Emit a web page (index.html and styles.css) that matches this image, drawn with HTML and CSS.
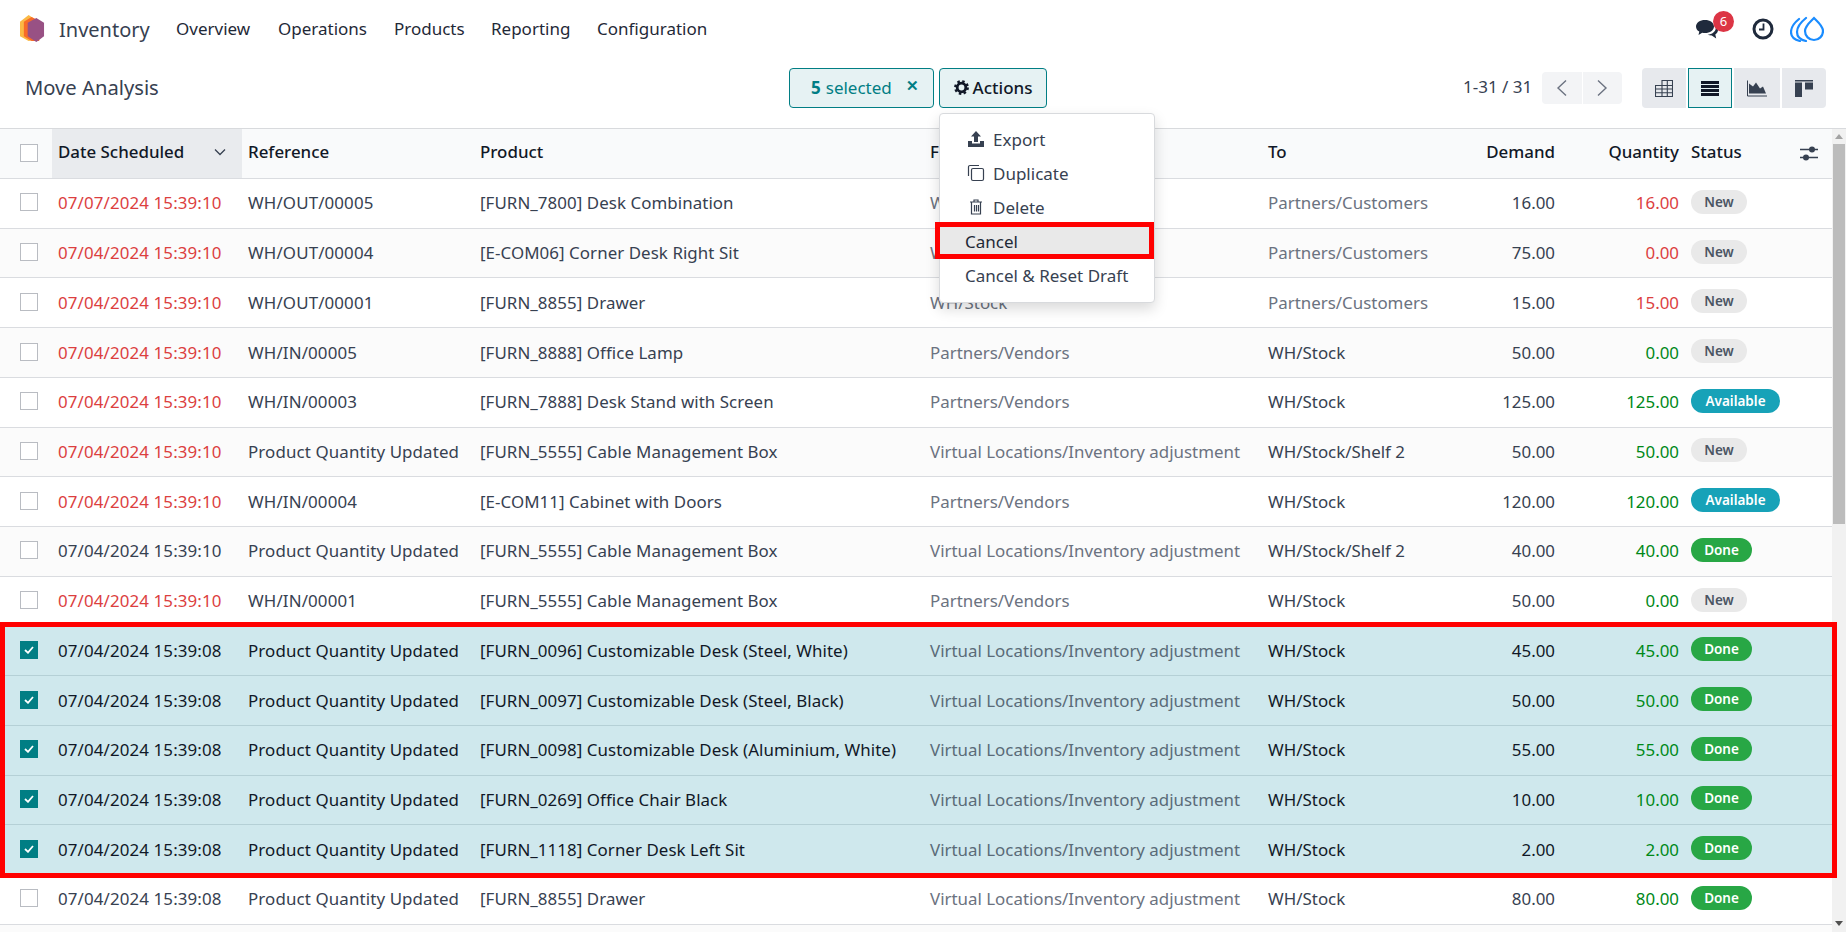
FILE: index.html
```html
<!DOCTYPE html>
<html lang="en">
<head>
<meta charset="utf-8">
<title>Move Analysis</title>
<link rel="stylesheet" href="styles.css">
</head>
<body>
<nav class="navbar">
  <svg class="logo" viewBox="0 0 26 29"><polygon points="0,7 9,0 15,4 15,26 9,27 0,22" fill="#fbb945"/><polygon points="4,7 12,2 20,6 20,27 12,27 4,22" fill="#f76b28"/><polygon points="8,8 17,3 25,8 25,22 17,28 8,22" fill="#985184"/></svg>
  <span class="brand">Inventory</span>
  <a class="menu m1">Overview</a>
  <a class="menu m2">Operations</a>
  <a class="menu m3">Products</a>
  <a class="menu m4">Reporting</a>
  <a class="menu m5">Configuration</a>
  <div class="systray">
    <span class="chat">
      <svg class="chat-icon" viewBox="0 0 22 19"><path d="M9 0c5 0 9 2.700 9 6.500S14 13 9 13c-1 0-2-.1-2.800-.3L2.500 15l.8-3.400C1.200 10.500 0 8.700 0 6.500 0 2.700 4 0 9 0z" fill="#1f2a3c"/><path d="M19.300 5.500C21 6.700 22 8.300 22 10c0 1.800-1 3.300-2.700 4.400l.9 4.100-4.400-2.900c-1.500 0-3-.3-4.200-.8 4.500-.3 8.200-3.200 8.200-7 0-.8-.2-1.600-.5-2.300z" fill="#1f2a3c"/></svg>
      <span class="badge">6</span>
    </span>
    <svg class="clock" viewBox="0 0 22 22"><circle cx="11" cy="11" r="9" fill="#fff" stroke="#1f2a3c" stroke-width="3"/><path d="M11.500 5.500v6H7" fill="none" stroke="#1f2a3c" stroke-width="1.800"/></svg>
    <svg class="drops" viewBox="0 0 34 26"><g fill="none" stroke="#1a8cff" stroke-width="2.200" stroke-linecap="round"><path d="M24 2c4 4 9 8 9 13a9 9 0 0 1-9 9c-5 0-9-4-9-9 0-5 5-9 9-13z"/><path d="M16 2C11 6 7 10 7 16c0 5 4 8 9 9"/><path d="M9 3C4 7 1 11 1 16c0 5 4 8 9 9"/></g></svg>
  </div>
</nav>

<header class="control">
  <h1 class="title">Move Analysis</h1>
  <div class="selected"><b>5</b> selected <span class="close">✕</span></div>
  <div class="actions-wrap">
    <button class="actions">
      <svg class="gear" viewBox="0 0 16 16"><circle cx="8" cy="8" r="4.600" fill="none" stroke="#111827" stroke-width="3"/><circle cx="8" cy="8" r="6.600" fill="none" stroke="#111827" stroke-width="2.600" stroke-dasharray="2.600 2.580"/></svg>
      Actions
    </button>
    <div class="dropdown">
      <a class="item iconed"><svg class="mi" viewBox="0 0 18 16"><path d="M9 0l5 5.500h-3V11H7V5.500H4z" fill="#374151"/><path d="M1 10h4v2.500h8V10h4v6H1z" fill="#374151"/></svg>Export</a>
      <a class="item iconed"><svg class="mi" viewBox="0 0 18 18"><path d="M12 1.500H3a1.500 1.500 0 0 0-1.500 1.500v9" fill="none" stroke="#374151" stroke-width="1.200"/><rect x="4.500" y="4.500" width="12" height="12" rx="1.500" fill="none" stroke="#374151" stroke-width="1.200"/></svg>Duplicate</a>
      <a class="item iconed"><svg class="mi" viewBox="0 0 18 18"><path d="M3 4h12M7 4V2h4v2M4.500 4v12h9V4M7.500 7v6.500M9.500 7v6.500M11.500 7v6.500" fill="none" stroke="#374151" stroke-width="1.200"/></svg>Delete</a>
      <a class="item hot">Cancel</a>
      <a class="item">Cancel &amp; Reset Draft</a>
    </div>
  </div>
  <div class="pager">1-31 / 31</div>
  <div class="pager-btns">
    <span class="pbtn"><svg viewBox="0 0 12 18"><path d="M10 1.500L2 9l8 7.500" fill="none" stroke="#6b7280" stroke-width="1.400"/></svg></span>
    <span class="pbtn"><svg viewBox="0 0 12 18"><path d="M2 1.500L10 9l-8 7.500" fill="none" stroke="#6b7280" stroke-width="1.400"/></svg></span>
  </div>
  <div class="views">
    <span class="view v1"><svg viewBox="0 0 18 17"><path d="M7 .5h10.500v16H.5V5.500H7zM.5 5.500h17M.5 9h17M.5 12.700h17M7 5.500v11M12.300.5v16" fill="none" stroke="#374151" stroke-width="1.100"/></svg></span>
    <span class="view active"><svg viewBox="0 0 18 15"><path d="M0 0h18v3H0zM0 4h18v3H0zM0 8h18v3H0zM0 12h18v3H0z" fill="#111827"/></svg></span>
    <span class="view v3"><svg viewBox="0 0 20 16"><path d="M.5 0v15.500H20" fill="none" stroke="#374151"/><path d="M2 13V3l4 3 3-4 4 6 3-2 3 7z" fill="#374151"/></svg></span>
    <span class="view v4"><svg viewBox="0 0 18 17"><path d="M0 0h18v1.500H0zM0 2.500h7V17H0zM10 2.500h8v7h-8z" fill="#374151"/></svg></span>
  </div>
</header>

<main class="content">
  <div class="list">
    <div class="row head">
      <div class="cell check"><span class="box"></span></div>
      <div class="cell sorted">Date Scheduled<svg class="chev" viewBox="0 0 12 8"><path d="M1 1.500l5 5 5-5" fill="none" stroke="#374151" stroke-width="1.300"/></svg></div>
      <div class="cell">Reference</div>
      <div class="cell">Product</div>
      <div class="cell">From</div>
      <div class="cell">To</div>
      <div class="cell num">Demand</div>
      <div class="cell num">Quantity</div>
      <div class="cell status">Status<svg class="sliders" viewBox="0 0 18 15"><path d="M0 3.500h18M0 11.500h18" stroke="#374151" stroke-width="1.300"/><circle cx="12" cy="3.500" r="3" fill="#374151"/><circle cx="6" cy="11.500" r="3" fill="#374151"/></svg></div>
    </div>

    <div class="row"><div class="cell check"><span class="box"></span></div><div class="cell late">07/07/2024 15:39:10</div><div class="cell">WH/OUT/00005</div><div class="cell">[FURN_7800] Desk Combination</div><div class="cell muted">WH/Stock</div><div class="cell muted">Partners/Customers</div><div class="cell num">16.00</div><div class="cell num late">16.00</div><div class="cell status"><span class="pill new">New</span></div></div>
    <div class="row"><div class="cell check"><span class="box"></span></div><div class="cell late">07/04/2024 15:39:10</div><div class="cell">WH/OUT/00004</div><div class="cell">[E-COM06] Corner Desk Right Sit</div><div class="cell muted">WH/Stock</div><div class="cell muted">Partners/Customers</div><div class="cell num">75.00</div><div class="cell num late">0.00</div><div class="cell status"><span class="pill new">New</span></div></div>
    <div class="row"><div class="cell check"><span class="box"></span></div><div class="cell late">07/04/2024 15:39:10</div><div class="cell">WH/OUT/00001</div><div class="cell">[FURN_8855] Drawer</div><div class="cell muted">WH/Stock</div><div class="cell muted">Partners/Customers</div><div class="cell num">15.00</div><div class="cell num late">15.00</div><div class="cell status"><span class="pill new">New</span></div></div>
    <div class="row"><div class="cell check"><span class="box"></span></div><div class="cell late">07/04/2024 15:39:10</div><div class="cell">WH/IN/00005</div><div class="cell">[FURN_8888] Office Lamp</div><div class="cell muted">Partners/Vendors</div><div class="cell">WH/Stock</div><div class="cell num">50.00</div><div class="cell num ok">0.00</div><div class="cell status"><span class="pill new">New</span></div></div>
    <div class="row"><div class="cell check"><span class="box"></span></div><div class="cell late">07/04/2024 15:39:10</div><div class="cell">WH/IN/00003</div><div class="cell">[FURN_7888] Desk Stand with Screen</div><div class="cell muted">Partners/Vendors</div><div class="cell">WH/Stock</div><div class="cell num">125.00</div><div class="cell num ok">125.00</div><div class="cell status"><span class="pill avail">Available</span></div></div>
    <div class="row"><div class="cell check"><span class="box"></span></div><div class="cell late">07/04/2024 15:39:10</div><div class="cell">Product Quantity Updated</div><div class="cell">[FURN_5555] Cable Management Box</div><div class="cell muted">Virtual Locations/Inventory adjustment</div><div class="cell">WH/Stock/Shelf 2</div><div class="cell num">50.00</div><div class="cell num ok">50.00</div><div class="cell status"><span class="pill new">New</span></div></div>
    <div class="row"><div class="cell check"><span class="box"></span></div><div class="cell late">07/04/2024 15:39:10</div><div class="cell">WH/IN/00004</div><div class="cell">[E-COM11] Cabinet with Doors</div><div class="cell muted">Partners/Vendors</div><div class="cell">WH/Stock</div><div class="cell num">120.00</div><div class="cell num ok">120.00</div><div class="cell status"><span class="pill avail">Available</span></div></div>
    <div class="row"><div class="cell check"><span class="box"></span></div><div class="cell">07/04/2024 15:39:10</div><div class="cell">Product Quantity Updated</div><div class="cell">[FURN_5555] Cable Management Box</div><div class="cell muted">Virtual Locations/Inventory adjustment</div><div class="cell">WH/Stock/Shelf 2</div><div class="cell num">40.00</div><div class="cell num ok">40.00</div><div class="cell status"><span class="pill done">Done</span></div></div>
    <div class="row"><div class="cell check"><span class="box"></span></div><div class="cell late">07/04/2024 15:39:10</div><div class="cell">WH/IN/00001</div><div class="cell">[FURN_5555] Cable Management Box</div><div class="cell muted">Partners/Vendors</div><div class="cell">WH/Stock</div><div class="cell num">50.00</div><div class="cell num ok">0.00</div><div class="cell status"><span class="pill new">New</span></div></div>

    <div class="row sel"><div class="cell check"><span class="box on"><svg viewBox="0 0 10 8"><path d="M1 4l3 2.800L9 1" fill="none" stroke="#fff" stroke-width="1.800"/></svg></span></div><div class="cell">07/04/2024 15:39:08</div><div class="cell">Product Quantity Updated</div><div class="cell">[FURN_0096] Customizable Desk (Steel, White)</div><div class="cell muted">Virtual Locations/Inventory adjustment</div><div class="cell">WH/Stock</div><div class="cell num">45.00</div><div class="cell num ok">45.00</div><div class="cell status"><span class="pill done">Done</span></div></div>
    <div class="row sel"><div class="cell check"><span class="box on"><svg viewBox="0 0 10 8"><path d="M1 4l3 2.800L9 1" fill="none" stroke="#fff" stroke-width="1.800"/></svg></span></div><div class="cell">07/04/2024 15:39:08</div><div class="cell">Product Quantity Updated</div><div class="cell">[FURN_0097] Customizable Desk (Steel, Black)</div><div class="cell muted">Virtual Locations/Inventory adjustment</div><div class="cell">WH/Stock</div><div class="cell num">50.00</div><div class="cell num ok">50.00</div><div class="cell status"><span class="pill done">Done</span></div></div>
    <div class="row sel"><div class="cell check"><span class="box on"><svg viewBox="0 0 10 8"><path d="M1 4l3 2.800L9 1" fill="none" stroke="#fff" stroke-width="1.800"/></svg></span></div><div class="cell">07/04/2024 15:39:08</div><div class="cell">Product Quantity Updated</div><div class="cell">[FURN_0098] Customizable Desk (Aluminium, White)</div><div class="cell muted">Virtual Locations/Inventory adjustment</div><div class="cell">WH/Stock</div><div class="cell num">55.00</div><div class="cell num ok">55.00</div><div class="cell status"><span class="pill done">Done</span></div></div>
    <div class="row sel"><div class="cell check"><span class="box on"><svg viewBox="0 0 10 8"><path d="M1 4l3 2.800L9 1" fill="none" stroke="#fff" stroke-width="1.800"/></svg></span></div><div class="cell">07/04/2024 15:39:08</div><div class="cell">Product Quantity Updated</div><div class="cell">[FURN_0269] Office Chair Black</div><div class="cell muted">Virtual Locations/Inventory adjustment</div><div class="cell">WH/Stock</div><div class="cell num">10.00</div><div class="cell num ok">10.00</div><div class="cell status"><span class="pill done">Done</span></div></div>
    <div class="row sel"><div class="cell check"><span class="box on"><svg viewBox="0 0 10 8"><path d="M1 4l3 2.800L9 1" fill="none" stroke="#fff" stroke-width="1.800"/></svg></span></div><div class="cell">07/04/2024 15:39:08</div><div class="cell">Product Quantity Updated</div><div class="cell">[FURN_1118] Corner Desk Left Sit</div><div class="cell muted">Virtual Locations/Inventory adjustment</div><div class="cell">WH/Stock</div><div class="cell num">2.00</div><div class="cell num ok">2.00</div><div class="cell status"><span class="pill done">Done</span></div></div>

    <div class="row"><div class="cell check"><span class="box"></span></div><div class="cell">07/04/2024 15:39:08</div><div class="cell">Product Quantity Updated</div><div class="cell">[FURN_8855] Drawer</div><div class="cell muted">Virtual Locations/Inventory adjustment</div><div class="cell">WH/Stock</div><div class="cell num">80.00</div><div class="cell num ok">80.00</div><div class="cell status"><span class="pill done">Done</span></div></div>
    <div class="row"></div>
  </div>
  <div class="scrollbar">
    <span class="arrow up"></span>
    <span class="thumb"></span>
    <span class="arrow down"></span>
  </div>
</main>

<div class="mark mark-rows"></div>
<div class="mark mark-cancel"></div>
</body>
</html>
```

FILE: styles.css
```css
* { box-sizing: border-box; }
html, body { margin: 0; height: 100%; }
body {
  position: relative;
  width: 1846px;
  height: 932px;
  overflow: hidden;
  display: flex;
  flex-direction: column;
  background: #fff;
  color: #374151;
  font-family: "Noto Sans", sans-serif;
  font-size: 16.9px;
}

/* top bar */
.navbar { flex: none; height: 58px; display: flex; align-items: center; padding-left: 20px; }
.logo { width: 25px; height: 28px; flex: none; margin-right: 14px; }
.brand { font-size: 20px; color: #374151; width: 117px; }
.menu { font-size: 17px; color: #1f2937; padding-bottom: 2px; }
.m1 { width: 102px; }
.m2 { width: 116px; }
.m3 { width: 97px; }
.m4 { width: 106px; }
.systray { margin-left: auto; display: flex; align-items: center; padding-right: 22px; }
.chat { position: relative; display: block; width: 22px; height: 19px; margin-right: 34px; }
.chat-icon { display: block; width: 22px; height: 19px; }
.badge {
  position: absolute; left: 17px; top: -9px;
  width: 21px; height: 21px; border-radius: 50%;
  background: #dc3545; color: #fff;
  font-size: 13px; line-height: 21px; text-align: center;
}
.clock { width: 22px; height: 22px; margin-right: 16px; }
.drops { width: 34px; height: 26px; }

/* control panel */
.control { flex: none; height: 70px; display: flex; align-items: flex-start; padding: 10px 0 0 25px; }
.title { flex: none; width: 764px; margin: 0; font-size: 20.2px; font-weight: 400; line-height: 39px; color: #374151; }
.selected {
  flex: none;
  width: 145px; height: 40px; margin-right: 5px;
  display: flex; align-items: center; padding: 0 0 2px 21px;
  background: #e6f2f3; border: 1px solid #017e84; border-radius: 4px;
  color: #017e84; font-size: 17px;
}
.selected b { margin-right: 5px; }
.close { margin-left: 14px; font-size: 15px; font-weight: 700; position: relative; top: -2px; }
.actions-wrap { flex: none; position: relative; width: 108px; }
.actions {
  width: 108px; height: 40px; padding: 0 0 2px;
  display: flex; align-items: center; justify-content: center; gap: 4px;
  background: #e6f2f3; border: 1px solid #017e84; border-radius: 4px;
  color: #111827; font: 500 17px "Noto Sans", sans-serif;
}
.gear { width: 15px; height: 15px; }
.dropdown {
  position: absolute; left: 0; top: 45px; z-index: 3;
  width: 216px; height: 190px; padding: 8px 0 10px;
  display: flex; flex-direction: column;
  background: #fff; border: 1px solid #d8dadd; border-radius: 4px;
  box-shadow: 0 6px 14px rgba(0,0,0,.15);
}
.item { height: 34px; display: flex; align-items: center; padding-left: 25px; font-size: 17px; color: #374151; }
.iconed { padding-left: 27px; }
.mi { width: 18px; height: 18px; margin-right: 8px; }
.hot { background: #e9e9e9; color: #1f2937; }
.pager { flex: none; margin-left: 416px; width: 79px; line-height: 38px; font-size: 17px; color: #374151; white-space: nowrap; }
.pager-btns { flex: none; display: flex; gap: 1px; margin-top: 4px; }
.pbtn { width: 39.500px; height: 32px; display: flex; align-items: center; justify-content: center; background: #f3f4f6; }
.pbtn:first-child { border-radius: 4px 0 0 4px; }
.pbtn:last-child { border-radius: 0 4px 4px 0; }
.pbtn svg { width: 12px; height: 18px; }
.views { flex: none; display: flex; gap: 2px; margin-left: 20px; }
.view { width: 44px; height: 40px; display: flex; align-items: center; justify-content: center; background: #e7e9ed; }
.view:first-child { border-radius: 4px 0 0 4px; }
.view:last-child { border-radius: 0 4px 4px 0; }
.view svg { width: 18px; height: 17px; }
.active { background: #e6f2f3; border: 1px solid #017e84; }
.active svg { height: 15px; }
.v3 { width: 46px; }
.v3 svg { width: 20px; }

/* list */
.content { flex: 1; min-height: 0; display: flex; border-top: 1px solid #d8dadd; }
.list { width: 1832px; flex: none; overflow: hidden; }
.row {
  height: 49.730px;
  display: grid;
  grid-template-columns: 52px 190px 232px 450px 338px 178px 120px 124px 148px;
  border-bottom: 1px solid #dadce0;
}
.row:nth-child(odd) { background: #fbfbfb; }
.cell { display: flex; align-items: center; padding: 0 5px 1px 6px; white-space: nowrap; overflow: hidden; }
.cell:nth-child(2), .cell:nth-child(3) { letter-spacing: .12px; }
.cell:nth-child(4) { letter-spacing: .06px; }
.head { height: 50px; background: #f9fafb !important; color: #111827; font-weight: 500; }
.head .cell { padding-bottom: 4px; letter-spacing: 0; }
.head .check { padding-bottom: 2px; }
.head .sorted { padding-right: 16px; }
.sorted { background: #e9ebee; justify-content: space-between; }
.chev { width: 12px; height: 8px; }
.check { padding: 0 0 2px 20px; }
.box { display: flex; align-items: center; justify-content: center; width: 18px; height: 18px; background: #fff; border: 1px solid #b9bcc2; }
.box.on { background: #017e84; border-color: #017e84; }
.box svg { width: 10px; height: 8px; }
.num { justify-content: flex-end; }
.status { position: relative; overflow: visible; padding-left: 7px; }
.sliders { position: absolute; right: 14px; top: 17px; width: 18px; height: 15px; }
.late { color: #dc3f3f; }
.ok { color: #008818; }
.muted { color: #6b7280; }
.sel, .sel:nth-child(odd) { background: #cfe8ed; border-bottom-color: #b5d0d6; color: #111827; }
.sel .muted { color: #5a6b78; }
.pill { height: 24px; display: flex; align-items: center; justify-content: center; border-radius: 12px; font-size: 13.5px; font-weight: 600; margin-bottom: 2px; }
.new { width: 56px; background: #e9e9e9; color: #4b5563; }
.done { width: 61px; background: #28a745; color: #fff; }
.avail { width: 89px; background: #17a2b8; color: #fff; }

/* scrollbar */
.scrollbar { width: 14px; flex: none; display: flex; flex-direction: column; align-items: center; background: #f1f1f1; }
.arrow { flex: none; width: 0; height: 0; border-left: 4px solid transparent; border-right: 4px solid transparent; }
.up { margin-top: 5px; border-bottom: 5px solid #a3a3a3; }
.down { margin-top: auto; margin-bottom: 6px; border-top: 5px solid #505050; }
.thumb { flex: none; width: 12px; height: 380px; margin-top: 5px; background: #bcbcbc; }

/* red annotation frames over the screenshot */
.mark { position: absolute; z-index: 5; border: 5px solid #f00; pointer-events: none; }
.mark-rows { left: 0; top: 622px; width: 1837px; height: 256px; }
.mark-cancel { left: 935px; top: 222px; width: 219px; height: 37px; }
```
